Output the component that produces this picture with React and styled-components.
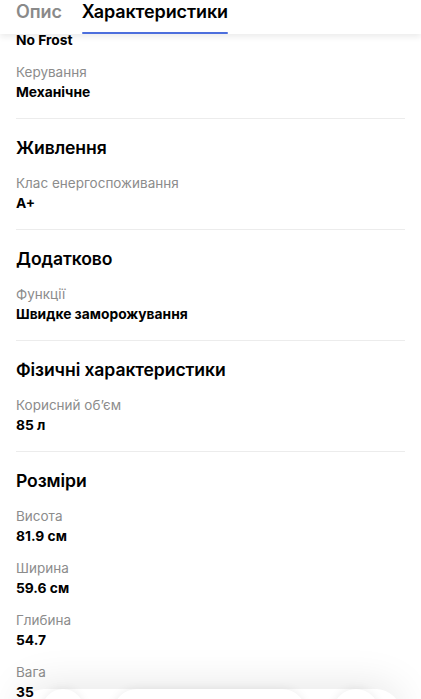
import React from "react";
import styled, { createGlobalStyle } from "styled-components";

const Global = createGlobalStyle`
  html, body { margin: 0; padding: 0; background: #fff; overflow: hidden; }
  body { font-family: Inter, "Noto Sans", "Liberation Sans", sans-serif; color: #000; -webkit-font-smoothing: antialiased; }
  * { box-sizing: border-box; }
`;

const Page = styled.div`
  width: 421px;
  height: 699px;
  position: relative;
  overflow: hidden;
  background: #fff;
`;

const TabBar = styled.div`
  position: absolute;
  top: 0;
  left: 0;
  right: 0;
  height: 34px;
  background: #fff;
  display: flex;
  align-items: stretch;
  gap: 20px;
  padding: 0 16px;
  box-shadow: 0 3px 6px rgba(0, 0, 0, 0.08);
  z-index: 3;
`;

const Tab = styled.div`
  position: relative;
  font-size: 18px;
  font-weight: 600;
  line-height: 24px;
  color: ${(p) => (p.$active ? "#000" : "#8a8a8a")};
  letter-spacing: -0.1px;
  &::after {
    content: "";
    display: ${(p) => (p.$active ? "block" : "none")};
    position: absolute;
    left: 0;
    right: 0;
    bottom: 0;
    height: 2px;
    background: #4d6fdd;
    border-radius: 1px;
  }
`;

const Content = styled.div`
  padding: 30px 16px 0;
  display: flex;
  flex-direction: column;
`;

const Section = styled.section`
  display: flex;
  flex-direction: column;
  gap: 12px;
  padding: ${(p) => (p.$first ? "0 0 16px" : "17px 0 16px")};
  border-bottom: 1px solid #ececec;
  &:last-child { border-bottom: none; }
`;

const Heading = styled.h2`
  margin: 0 0 1px;
  font-size: 17.6px;
  font-weight: 600;
  line-height: 24px;
  letter-spacing: -0.1px;
`;

const Item = styled.div`
  display: flex;
  flex-direction: column;
`;

const Label = styled.div`
  font-size: 13.5px;
  line-height: 20px;
  color: #8c8c8c;
`;

const Value = styled.div`
  font-size: 13.8px;
  line-height: 20px;
  font-weight: 700;
  color: #000;
`;

const Dock = styled.div`
  position: absolute;
  left: 0;
  right: 0;
  top: 689px;
  height: 60px;
  display: flex;
  align-items: flex-start;
  padding-left: 42px;
  z-index: 2;
  &::before {
    content: "";
    position: absolute;
    left: 20px;
    right: 20px;
    top: 0;
    height: 50px;
    border-radius: 30px;
    box-shadow: 0 -4px 40px rgba(0, 0, 0, 0.10);
  }
`;

const Round = styled.div`
  width: ${(p) => p.$w}px;
  height: ${(p) => p.$w}px;
  margin-left: ${(p) => p.$ml}px;
  border-radius: 50%;
  background: #fff;
  box-shadow: 0 0 10px rgba(0, 0, 0, 0.08);
  position: relative;
`;

const Pill = styled.div`
  width: 193px;
  height: 48px;
  margin-left: ${(p) => p.$ml}px;
  border-radius: 24px;
  background: #fff;
  box-shadow: 0 0 10px rgba(0, 0, 0, 0.08);
  position: relative;
`;

const data = [
  { items: [[null, "No Frost"], ["Керування", "Механічне"]] },
  { title: "Живлення", items: [["Клас енергоспоживання", "A+"]] },
  { title: "Додатково", items: [["Функції", "Швидке заморожування"]] },
  { title: "Фізичні характеристики", items: [["Корисний об\u02BCєм", "85 л"]] },
  {
    title: "Розміри",
    items: [
      ["Висота", "81.9 см"],
      ["Ширина", "59.6 см"],
      ["Глибина", "54.7"],
      ["Вага", "35"],
    ],
  },
];

export default function App() {
  return (
    <Page>
      <Global />
      <TabBar>
        <Tab>Опис</Tab>
        <Tab $active>Характеристики</Tab>
      </TabBar>
      <Content>
        {data.map((s, i) => (
          <Section key={i} $first={i === 0}>
            {s.title && <Heading>{s.title}</Heading>}
            {s.items.map(([l, v]) => (
              <Item key={v}>
                {l && <Label>{l}</Label>}
                <Value>{v}</Value>
              </Item>
            ))}
          </Section>
        ))}
      </Content>
      <Dock>
        <Round $w={42} $ml={0} />
        <Pill $ml={29} />
        <Round $w={46} $ml={27} />
      </Dock>
    </Page>
  );
}
